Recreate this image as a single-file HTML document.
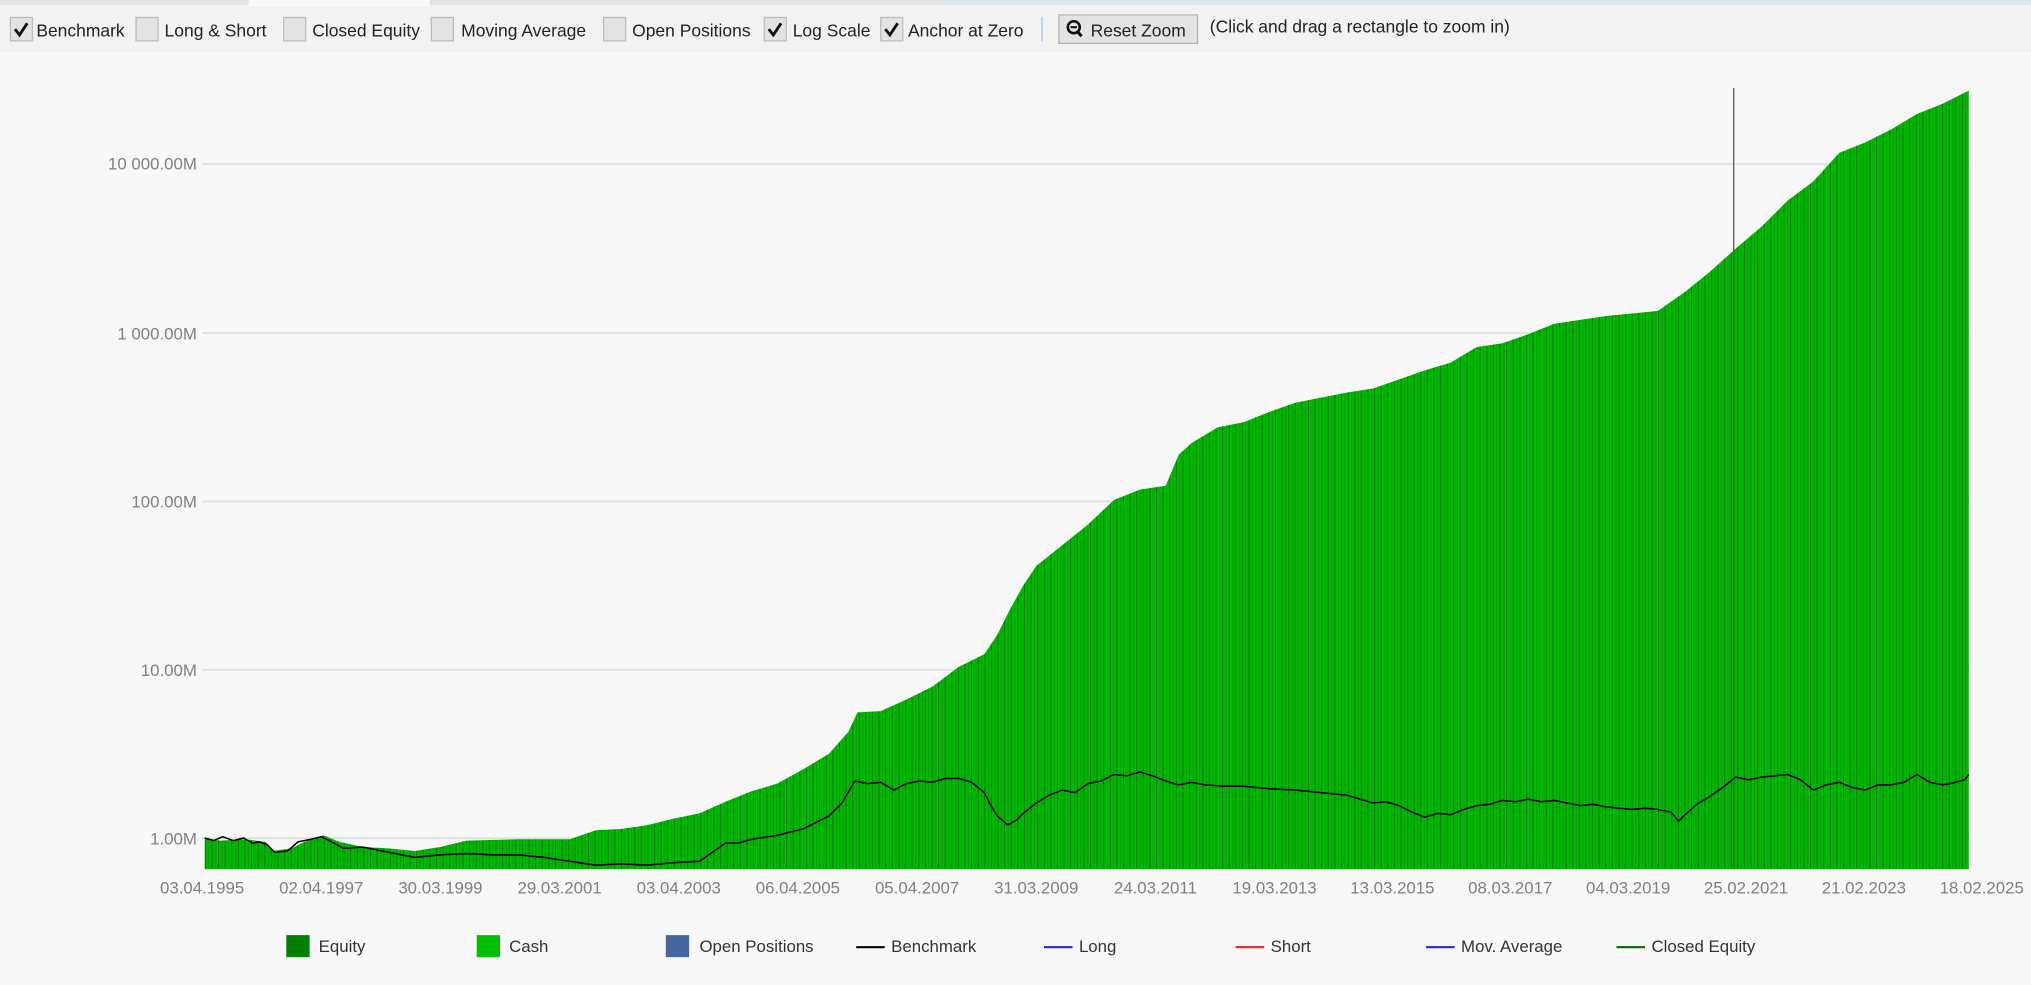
<!DOCTYPE html>
<html><head><meta charset="utf-8"><style>
html,body{margin:0;padding:0;background:#f8f8f8;overflow:hidden}
svg{display:block}
text{font-family:"Liberation Sans",sans-serif}
</style></head><body>
<svg width="2031" height="985" viewBox="0 0 1568 760.5" xmlns="http://www.w3.org/2000/svg">
<defs>
<pattern id="st" width="5.1" height="10" patternUnits="userSpaceOnUse">
<rect width="5.1" height="10" fill="#00b800"/>
<rect x="0" width="0.8" height="10" fill="#067a06"/>
<rect x="2.9" width="0.5" height="10" fill="#089508"/>
</pattern>
</defs>
<rect width="1568" height="760.5" fill="#f8f8f8"/>
<!-- toolbar -->
<rect width="1568" height="40" fill="#f2f2f2"/>
<rect width="1568" height="4" fill="#e4e4e4"/>
<rect x="192" width="140" height="5" fill="#fafafa"/>
<rect x="725" y="0" width="843" height="3" fill="#dbe6f0"/>
<g font-size="13.5" fill="#222">
<g stroke="#bdbdbd" fill="#e3e3e3">
<rect x="8" y="13.5" width="17" height="18"/><rect x="105" y="13.5" width="17" height="18"/>
<rect x="219" y="13.5" width="17" height="18"/><rect x="333" y="13.5" width="17" height="18"/>
<rect x="466" y="13.5" width="17" height="18"/><rect x="590" y="13.5" width="17" height="18"/>
<rect x="680" y="13.5" width="17" height="18"/>
</g>
<g stroke="#111" stroke-width="2.2" fill="none">
<path d="M11.5 22.5l3.5 4.5 6-9"/><path d="M593.5 22.5l3.5 4.5 6-9"/><path d="M683.5 22.5l3.5 4.5 6-9"/>
</g>
<text x="28" y="28">Benchmark</text><text x="127" y="28">Long &amp; Short</text>
<text x="241" y="28">Closed Equity</text><text x="356" y="28">Moving Average</text>
<text x="488" y="28">Open Positions</text><text x="612" y="28">Log Scale</text>
<text x="701" y="28">Anchor at Zero</text>
<rect x="804" y="13" width="1" height="19" fill="#a9c4dd"/>
<rect x="817.5" y="11.5" width="107" height="22" fill="#e3e3e3" stroke="#b4b4b4"/>
<circle cx="829" cy="21" r="4.6" fill="none" stroke="#111" stroke-width="2"/>
<path d="M826.5 21h5" stroke="#111" stroke-width="1.6"/>
<path d="M832 24.5l3 3.5" stroke="#111" stroke-width="2.4"/>
<text x="842" y="28">Reset Zoom</text>
<text x="934" y="25">(Click and drag a rectangle to zoom in)</text>
</g>
<!-- grid -->
<g fill="#dedede">
<rect x="156" y="126" width="1364" height="1.3"/><rect x="156" y="256.5" width="1364" height="1.3"/>
<rect x="156" y="386.5" width="1364" height="1.3"/><rect x="156" y="516.5" width="1364" height="1.3"/>
<rect x="156" y="646.5" width="1364" height="1.3"/>
</g>
<g font-size="13" fill="#808080" text-anchor="end">
<text x="152" y="131">10 000.00M</text><text x="152" y="262">1 000.00M</text>
<text x="152" y="392">100.00M</text><text x="152" y="522">10.00M</text><text x="152" y="652">1.00M</text>
</g>
<!-- equity -->
<path fill="url(#st)" d="M158 671L158 647 170 649 190 648 205 650 210 657 225 655 235 650 250 645 262 650 280 654 300 655 320 657 340 654 360 649 400 648 440 648 460 641 480 640 500 637 520 632 540 628 560 619 580 611 600 605 620 594 640 582 655 565 662 550 680 549 700 540 720 530 740 515 760 505 770 490 780 470 790 452 800 437 820 421 840 405 860 386 880 378 900 375 910 351 920 342 940 330 960 326 980 318 1000 311 1020 307 1040 303 1060 300 1080 293 1100 286 1120 280 1140 268 1160 265 1180 258 1200 250 1220 247 1240 244 1260 242 1280 240 1300 226 1320 210 1340 192 1360 175 1380 155 1400 140 1420 118 1440 110 1460 100 1480 88 1500 80 1520 70 1520 671Z"/>
<rect x="1338" y="68" width="1" height="603" fill="#555"/>
<!-- benchmark -->
<path fill="none" stroke="#000" stroke-width="1.2" stroke-linejoin="round" d="M158 647L165 649 172 646 180 649 188 647 195 651 200 650 206 652 212 658 222 657 230 650 240 648 248 646 256 650 265 655 280 654 290 656 305 659 320 662 340 660 360 659 380 660 400 660 420 662 440 665 460 668 480 667 500 668 520 666 540 665 550 658 560 651 570 651 580 648 600 645 620 640 640 630 650 620 660 603 670 605 680 604 690 610 700 605 710 603 720 604 730 601 740 601 750 604 760 612 765 622 770 630 778 637 785 633 790 628 800 620 810 614 820 610 830 612 840 605 850 603 860 598 870 599 880 596 890 599 900 603 910 606 920 604 930 606 945 607 960 607 980 609 1000 610 1020 612 1040 614 1060 620 1070 619 1080 622 1090 627 1100 631 1110 628 1120 629 1130 625 1140 622 1150 621 1160 618 1170 619 1180 617 1190 619 1200 618 1210 620 1220 622 1230 621 1240 623 1250 624 1260 625 1270 624 1280 625 1290 627 1296 634 1300 630 1310 621 1320 615 1330 608 1340 600 1350 602 1360 600 1370 599 1380 598 1390 602 1400 610 1410 606 1420 604 1430 608 1440 610 1450 606 1460 606 1470 604 1480 598 1490 604 1500 606 1510 604 1517 602 1520 598"/>
<!-- x labels -->
<g font-size="13" fill="#808080" text-anchor="middle">
<text x="156" y="690">03.04.1995</text><text x="248" y="690">02.04.1997</text><text x="340" y="690">30.03.1999</text>
<text x="432" y="690">29.03.2001</text><text x="524" y="690">03.04.2003</text><text x="616" y="690">06.04.2005</text>
<text x="708" y="690">05.04.2007</text><text x="800" y="690">31.03.2009</text><text x="892" y="690">24.03.2011</text>
<text x="984" y="690">19.03.2013</text><text x="1075" y="690">13.03.2015</text><text x="1166" y="690">08.03.2017</text>
<text x="1257" y="690">04.03.2019</text><text x="1348" y="690">25.02.2021</text><text x="1439" y="690">21.02.2023</text>
<text x="1530" y="690">18.02.2025</text>
</g>
<!-- legend -->
<g font-size="13" fill="#333">
<rect x="221" y="722" width="18" height="17" fill="#008000"/><text x="246" y="735">Equity</text>
<rect x="368" y="722" width="18" height="17" fill="#00c000"/><text x="393" y="735">Cash</text>
<rect x="514" y="722" width="18" height="17" fill="#4465a0"/><text x="540" y="735">Open Positions</text>
<rect x="661" y="730.5" width="22" height="1.6" fill="#000"/><text x="688" y="735">Benchmark</text>
<rect x="806" y="730.5" width="22" height="1.6" fill="#2020ee"/><text x="833" y="735">Long</text>
<rect x="954" y="730.5" width="22" height="1.6" fill="#ee2020"/><text x="981" y="735">Short</text>
<rect x="1101" y="730.5" width="22" height="1.6" fill="#2020ee"/><text x="1128" y="735">Mov. Average</text>
<rect x="1248" y="730.5" width="22" height="1.6" fill="#006600"/><text x="1275" y="735">Closed Equity</text>
</g>
</svg>
</body></html>
